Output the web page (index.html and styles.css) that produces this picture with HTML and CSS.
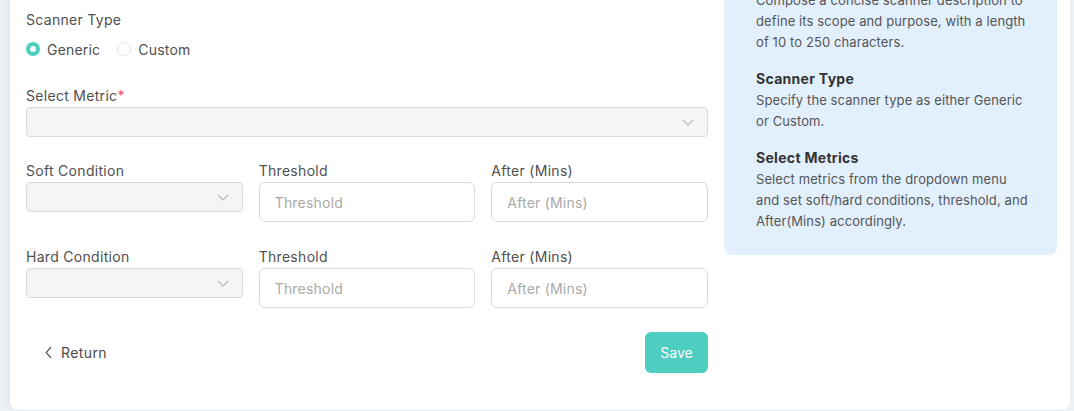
FILE: index.html
```html
<!DOCTYPE html>
<html lang="en">
<head>
<meta charset="utf-8">
<title>Scanner</title>
<link rel="stylesheet" href="styles.css">
</head>
<body>
<div class="page">
  <div class="card">
    <form class="form">
      <div class="label">Scanner Type</div>
      <div class="radios">
        <label class="radio"><span class="dot checked"></span>Generic</label>
        <label class="radio"><span class="dot"></span>Custom</label>
      </div>

      <div class="label metric-label">Select Metric<span class="req">*</span></div>
      <div class="select">
        <svg class="chev" width="12" height="7" viewBox="0 0 12 7"><path d="M1 1l5 5 5-5" fill="none" stroke="#b8b8b8" stroke-width="1.1"/></svg>
      </div>

      <div class="row first">
        <div class="col">
          <div class="label">Soft Condition</div>
          <div class="select">
            <svg class="chev" width="12" height="7" viewBox="0 0 12 7"><path d="M1 1l5 5 5-5" fill="none" stroke="#b8b8b8" stroke-width="1.1"/></svg>
          </div>
        </div>
        <div class="col">
          <div class="label">Threshold</div>
          <input class="input" type="text" placeholder="Threshold">
        </div>
        <div class="col">
          <div class="label">After (Mins)</div>
          <input class="input" type="text" placeholder="After (Mins)">
        </div>
      </div>

      <div class="row second">
        <div class="col">
          <div class="label">Hard Condition</div>
          <div class="select">
            <svg class="chev" width="12" height="7" viewBox="0 0 12 7"><path d="M1 1l5 5 5-5" fill="none" stroke="#b8b8b8" stroke-width="1.1"/></svg>
          </div>
        </div>
        <div class="col">
          <div class="label">Threshold</div>
          <input class="input" type="text" placeholder="Threshold">
        </div>
        <div class="col">
          <div class="label">After (Mins)</div>
          <input class="input" type="text" placeholder="After (Mins)">
        </div>
      </div>

      <div class="actions">
        <button type="button" class="return">
          <svg width="7" height="13" viewBox="0 0 7 13"><path d="M6 1L1.2 6.5 6 12" fill="none" stroke="#555" stroke-width="1.2"/></svg>
          Return
        </button>
        <button type="button" class="save">Save</button>
      </div>
    </form>

    <aside class="info">
      <section class="info-sec">
        <h4>Scanner Description</h4>
        <p>Compose a concise scanner description to define its scope and purpose, with a length of 10 to 250 characters.</p>
      </section>
      <section class="info-sec">
        <h4>Scanner Type</h4>
        <p>Specify the scanner type as either Generic or Custom.</p>
      </section>
      <section class="info-sec">
        <h4>Select Metrics</h4>
        <p>Select metrics from the dropdown menu and set soft/hard conditions, threshold, and After(Mins) accordingly.</p>
      </section>
    </aside>
  </div>
</div>
</body>
</html>
```

FILE: styles.css
```css
* { box-sizing: border-box; }

html, body {
  margin: 0;
  height: 411px;
  overflow: hidden;
  background: #edf2f7;
  font-family: Inter, "Open Sans", sans-serif;
  color: #4d4d4d;
}

.page {
  height: 411px;
  padding: 0 4px 1px 10px;
}

.card {
  margin-top: -55px;
  height: 465px;
  background: #fff;
  border-radius: 8px;
  box-shadow: -2px 0 6px rgba(120, 150, 180, 0.12);
  display: flex;
  align-items: flex-start;
  gap: 16px;
  padding: 0 13px 0 16px;
}

.form {
  flex: 1;
  padding-top: 65px;
  display: flex;
  flex-direction: column;
}

.label {
  font-size: 14px;
  line-height: 20px;
  letter-spacing: 0.3px;
  color: #4f4f4f;
  margin-bottom: 1px;
}

.req { color: #e8487a; }

.radios {
  margin-top: 8px;
  height: 20px;
  display: flex;
  align-items: center;
  gap: 17px;
}

.radio {
  display: flex;
  align-items: center;
  gap: 7px;
  font-size: 14px;
  letter-spacing: 0.2px;
  color: #4f4f4f;
}

.dot {
  width: 14px;
  height: 14px;
  border-radius: 50%;
  border: 1px solid #e2e2e2;
  background: #fff;
}

.dot.checked {
  border: 4px solid #4ecdc1;
  background: #fff;
}

.metric-label { margin-top: 27px; }

.select {
  height: 30px;
  background: #f5f5f5;
  border: 1px solid #dadada;
  border-radius: 4px;
  display: flex;
  align-items: center;
  justify-content: flex-end;
  padding-right: 13px;
}

.chev { display: block; }

.row {
  display: grid;
  grid-template-columns: repeat(3, 1fr);
  gap: 16px;
  align-items: start;
}

.row.first { margin-top: 24px; }
.row.second { margin-top: 25px; }

.input {
  width: 100%;
  height: 40px;
  border: 1px solid #dadada;
  border-radius: 6px;
  background: #fff;
  padding: 0 15px;
  font-family: inherit;
  font-size: 14px;
  letter-spacing: 0.2px;
  color: #4f4f4f;
  outline: none;
}

.input::placeholder { color: #a9a9a9; }

.actions {
  margin-top: 24px;
  display: flex;
  justify-content: space-between;
  align-items: center;
}

.return {
  border: 0;
  background: none;
  display: flex;
  align-items: center;
  gap: 9px;
  padding: 0 0 0 19px;
  font-family: inherit;
  font-size: 14px;
  letter-spacing: 0.4px;
  color: #4a4a4a;
  cursor: pointer;
}

.save {
  width: 63px;
  height: 41px;
  border: 0;
  border-radius: 6px;
  background: #4ecdc1;
  color: #fff;
  font-family: inherit;
  font-size: 14px;
  cursor: pointer;
}

.info {
  width: 333px;
  flex: none;
  background: #e2f0fd;
  border-radius: 8px;
  padding: 16px 15px;
}

.info-sec {
  padding: 8px 13px 7px 17px;
  border-bottom: 1px solid #e9eef3;
}

.info-sec:last-child { border-bottom: 0; }

.info-sec h4 {
  margin: 0 0 1px;
  font-size: 14px;
  line-height: 20px;
  font-weight: 700;
  letter-spacing: 0.3px;
  color: #333;
}

.info-sec p {
  margin: 0;
  font-size: 13px;
  line-height: 21px;
  letter-spacing: 0.1px;
  color: #555;
}
```
